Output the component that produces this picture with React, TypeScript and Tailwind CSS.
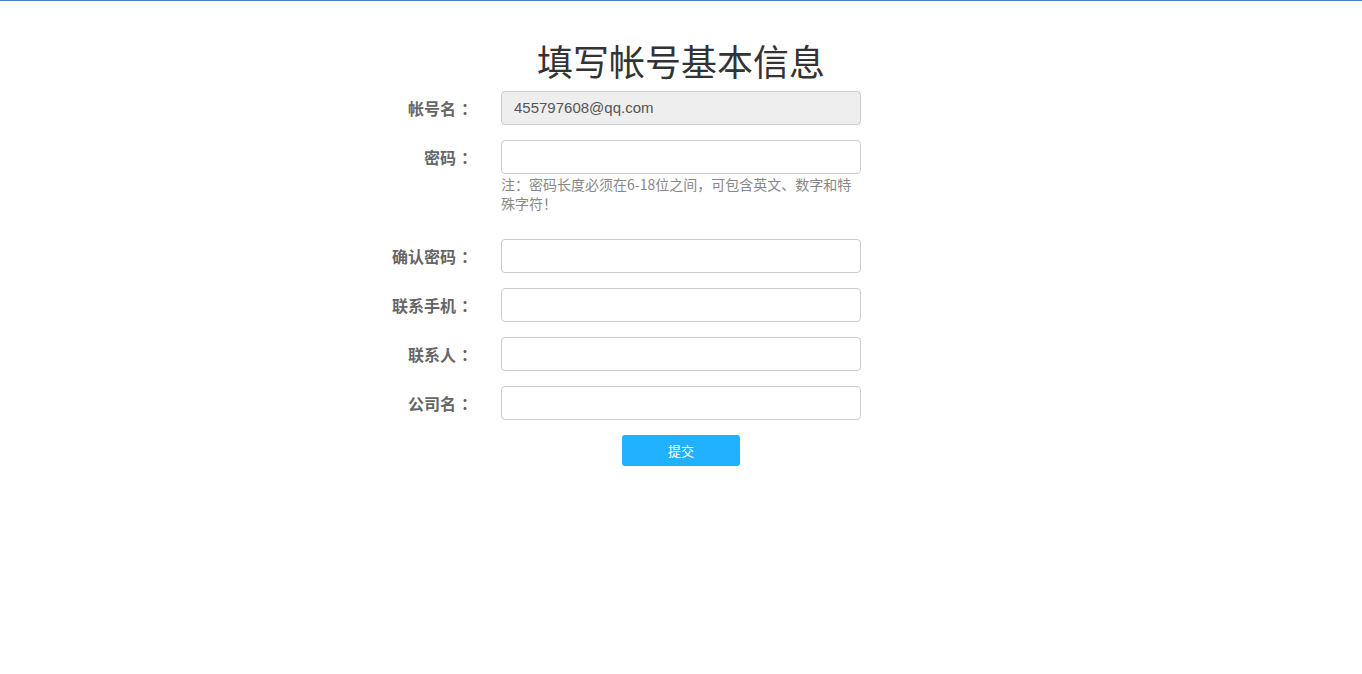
import React from "react";

const font = { fontFamily: '"Liberation Sans", "Noto Sans CJK SC", sans-serif' };
const cjk = { fontFamily: '"Noto Sans CJK SC", "Liberation Sans", sans-serif' };

function Row({ label, children, className = "" }: { label: string; children: React.ReactNode; className?: string }) {
  return (
    <div className={"flex " + className}>
      <div className="w-[180px] shrink-0 pr-[24px] text-right text-[16px] font-bold leading-[34px] text-[#666]" style={cjk}>
        {label}
        <span className="ml-[5px]">：</span>
      </div>
      <div className="w-[360px]">{children}</div>
    </div>
  );
}

const inputBase = "block h-[34px] w-[360px] rounded-[4px] border border-[#ccc] px-[12px] text-[15px] text-[#555] outline-none";
const inputCls = inputBase + " bg-white";

export default function App() {
  return (
    <div className="min-h-[674px] border-t border-[#4a7cc4] bg-white" style={font}>
      <div className="mx-auto w-[720px] pt-[32px]">
        <h1 className="mb-[4px] text-center text-[36px] font-normal leading-[54px] text-[#333]" style={cjk}>填写帐号基本信息</h1>
        <div className="flex flex-col">
          <Row label="帐号名">
            <div className={inputBase + " bg-[#eee] leading-[32px]"}>455797608@qq.com</div>
          </Row>
          <Row label="密码" className="mt-[15px]">
            <input type="password" className={inputCls} />
            <p className="mt-[1px] text-[14px] leading-[19px] text-[#888]" style={cjk}>注：密码长度必须在6-18位之间，可包含英文、数字和特殊字符！</p>
          </Row>
          <Row label="确认密码" className="mt-[26px]">
            <input type="password" className={inputCls} />
          </Row>
          <Row label="联系手机" className="mt-[15px]">
            <input type="text" className={inputCls} />
          </Row>
          <Row label="联系人" className="mt-[15px]">
            <input type="text" className={inputCls} />
          </Row>
          <Row label="公司名" className="mt-[15px]">
            <input type="text" className={inputCls} />
          </Row>
          <div className="mt-[15px] flex justify-center">
            <button className="h-[31px] w-[118px] rounded-[3px] bg-[#22b1ff] text-[13px] text-white" style={cjk}>提交</button>
          </div>
        </div>
      </div>
    </div>
  );
}
